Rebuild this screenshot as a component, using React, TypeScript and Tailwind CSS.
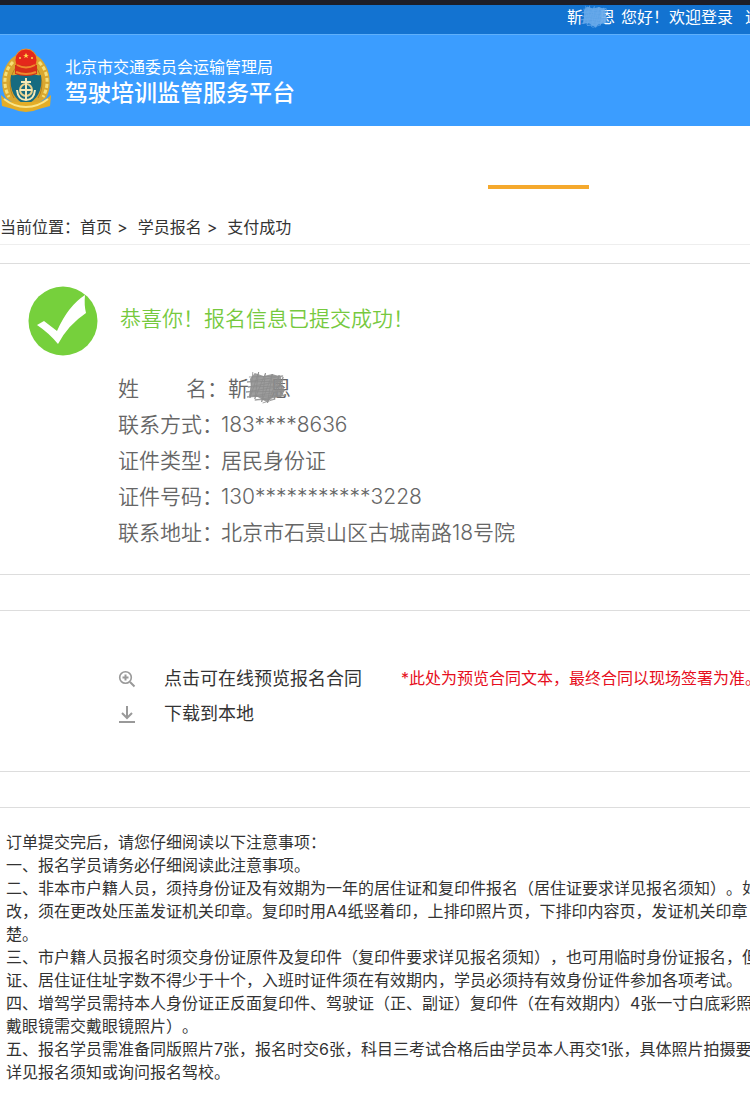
import React from 'react';

const notices = [
    '订单提交完后，请您仔细阅读以下注意事项：',
    '一、报名学员请务必仔细阅读此注意事项。',
    '二、非本市户籍人员，须持身份证及有效期为一年的居住证和复印件报名（居住证要求详见报名须知）。如',
    '改，须在更改处压盖发证机关印章。复印时用A4纸竖着印，上排印照片页，下排印内容页，发证机关印章',
    '楚。',
    '三、市户籍人员报名时须交身份证原件及复印件（复印件要求详见报名须知），也可用临时身份证报名，但',
    '证、居住证住址字数不得少于十个，入班时证件须在有效期内，学员必须持有效身份证件参加各项考试。',
    '四、增驾学员需持本人身份证正反面复印件、驾驶证（正、副证）复印件（在有效期内）4张一寸白底彩照',
    '戴眼镜需交戴眼镜照片）。',
    '五、报名学员需准备同版照片7张，报名时交6张，科目三考试合格后由学员本人再交1张，具体照片拍摄要',
    '详见报名须知或询问报名驾校。',
];

const details = [
    { label: '联系方式：', value: '183****8636' },
    { label: '证件类型：', value: '居民身份证' },
    { label: '证件号码：', value: '130***********3228' },
    { label: '联系地址：', value: '北京市石景山区古城南路18号院' },
];

const Emblem = () => (
    <svg viewBox="0 0 52 66" className="w-[52px] h-[66px] shrink-0" aria-hidden="true">
        <path d="M17 7C3 13 -2 36 6 50L18 58H34L46 50C54 36 49 13 35 7L33 18H19Z" fill="#d9a730" />
        <path d="M13 14C3 24 3 38 9 49M39 14C49 24 49 38 43 49" stroke="#f7df78" strokeWidth="3" strokeDasharray="4 2" fill="none" />
        <path d="M17 18C9 28 8 40 14 50M35 18C43 28 44 40 38 50" stroke="#b9811d" strokeWidth="1" fill="none" />
        <path d="M11 27Q18 28 19 24H33Q34 28 41 27C43 43 37 52 26 57C15 52 9 43 11 27Z" fill="#176b80" />
        <circle cx="26" cy="12" r="11" fill="#e5281b" stroke="#e9952b" strokeWidth="1" />
        <path d="M15 17H37L37 26Q26 30 15 26Z" fill="#d62f19" />
        <path d="M17 17Q26 22 35 17M16 24Q26 28 36 24" stroke="#f08a2c" strokeWidth="2" fill="none" />
        <path d="M26 5l1 2h2l-2 1 1 2-2-1-2 1 1-2-2-1h2z" fill="#ffd84c" />
        <circle cx="20" cy="10" r="1" fill="#ffd84c" />
        <circle cx="32" cy="10" r="1" fill="#ffd84c" />
        <circle cx="26" cy="42" r="6" fill="none" stroke="#ead18b" strokeWidth="2" />
        <path d="M26 30V52M21 34H31M17 42Q18 52 26 52Q34 52 35 42M20 42H32" stroke="#f5e9b8" strokeWidth="2" fill="none" />
        <path d="M1 47Q8 55 18 54H34Q44 55 51 47L50 58L39 61Q26 67 13 61L2 58Z" fill="#e4ad27" />
        <path d="M4 51Q14 59 26 59Q38 59 48 51" stroke="#fae58a" strokeWidth="2" fill="none" />
    </svg>
);

const Scribble = ({ className }: { className: string }) => (
    <svg viewBox="0 0 42 34" preserveAspectRatio="none" className={className} aria-hidden="true">
        <path d="M4 8L9 2L18 5L27 3L36 6L36 14L40 19L36 26L27 27L21 31L12 26L3 25L5 15Z" fill="currentColor" opacity="0.85" />
        <path d="M3 6L38 5L1 11L37 10L2 16L38 15L0 21L39 20L1 26L41 24L9 29L30 28L17 32M7 1L4 27L13 1L9 28L20 2L16 31L27 3L22 32L34 4L29 28L38 6L35 26" fill="none" stroke="currentColor" strokeWidth="1" opacity="0.8" />
    </svg>
);

const App: React.FC = () => (
    <div className="min-h-screen overflow-hidden whitespace-nowrap bg-white pb-3 text-base text-[#333] [font-family:Inter,'Noto_Sans_CJK_SC',sans-serif] [text-spacing-trim:space-all]">
        <div className="h-[5px] bg-[#1d1e28]" />
        <div className="flex h-[29px] items-start justify-end bg-[#1373d1] leading-6 text-white">
            <span className="relative mr-1.5">
                靳&#12288;恩
                <Scribble className="absolute left-[14px] top-0 h-6 w-7 text-[#6aaaea]" />
            </span>
            <span className="mr-3">您好！欢迎登录</span>
            <a href="#logout" className="w-[5px] overflow-hidden">退出</a>
        </div>

        <header className="flex h-[92px] items-center border-t border-[#5fb0fb] bg-[#3b9dff] text-white">
            <Emblem />
            <div className="ml-[13px]">
                <p className="leading-6">北京市交通委员会运输管理局</p>
                <h1 className="text-[23px] font-medium leading-7">驾驶培训监管服务平台</h1>
            </div>
        </header>

        <nav className="flex h-[63px] items-end justify-end pr-[161px]" aria-label="主导航">
            <span className="h-1 w-[101px] bg-[#f5a92d]" />
        </nav>

        <nav className="flex h-14 items-end border-b border-[#eee] pb-[5px] leading-6" aria-label="当前位置">
            <span>当前位置：</span>
            <a href="#home">首页</a>
            <span className="ml-[5px] mr-2.5">&gt;</span>
            <a href="#signup">学员报名</a>
            <span className="ml-[5px] mr-2.5">&gt;</span>
            <span>支付成功</span>
        </nav>

        <main>
            <section className="mt-[18px] flex h-[312px] border-y border-[#ddd] pl-7 pt-[22px]">
                <svg viewBox="0 0 70 70" className="size-[70px] shrink-0" aria-hidden="true">
                    <circle cx="35" cy="35" r="34.5" fill="#76d03c" />
                    <path d="M9 39L16 35L29 45Q40 20 57 9Q56 19 58 27Q40 39 30 58Q21 47 9 39Z" fill="#fff" />
                </svg>
                <div className="ml-5 text-[21px] leading-9 text-[#666]">
                    <h2 className="ml-0.5 mt-[15px] font-[350] text-[#76c93e]">恭喜你！报名信息已提交成功！</h2>
                    <dl className="mt-[34px] font-[350]">
                        <div className="flex">
                            <dt className="flex w-[110px] justify-between"><span>姓</span><span>名：</span></dt>
                            <dd className="relative">
                                靳&#12288;恩
                                <Scribble className="absolute left-[18px] top-0 h-[34px] w-[41px] text-[#8c8c8c]" />
                            </dd>
                        </div>
                        {details.map(({ label, value }) => (
                            <div key={label} className="flex">
                                <dt className="w-[103px]">{label}</dt>
                                <dd>{value}</dd>
                            </div>
                        ))}
                    </dl>
                </div>
            </section>

            <section className="mt-[35px] h-[162px] border-y border-[#ddd] pl-[118px] pt-[50px] text-lg leading-[35px]">
                <div className="flex items-center">
                    <svg viewBox="0 0 18 18" className="size-[18px] shrink-0" fill="none" stroke="#999" strokeWidth="2" aria-hidden="true">
                        <circle cx="7.5" cy="7.5" r="5.8" strokeWidth="1.6" />
                        <path d="M12 12L16.5 16.5M4.5 7.5H10.5M7.5 4.5V10.5" />
                    </svg>
                    <a href="#preview" className="ml-7">点击可在线预览报名合同</a>
                    <span className="ml-[39px] text-base leading-[35px] text-[#e60e20]">*此处为预览合同文本，最终合同以现场签署为准。</span>
                </div>
                <div className="flex items-center">
                    <svg viewBox="0 0 18 18" className="size-[18px] shrink-0" fill="none" stroke="#999" strokeWidth="2" aria-hidden="true">
                        <path d="M9 1V13M4 8L9 13L14 8M1 17H17" />
                    </svg>
                    <a href="#download" className="ml-7">下载到本地</a>
                </div>
            </section>

            <section className="mt-[35px] border-t border-[#ddd] pl-1.5 pt-[23px] leading-[23px]">
                {notices.map(line => <p key={line}>{line}</p>)}
            </section>
        </main>
    </div>
);

export default App;
